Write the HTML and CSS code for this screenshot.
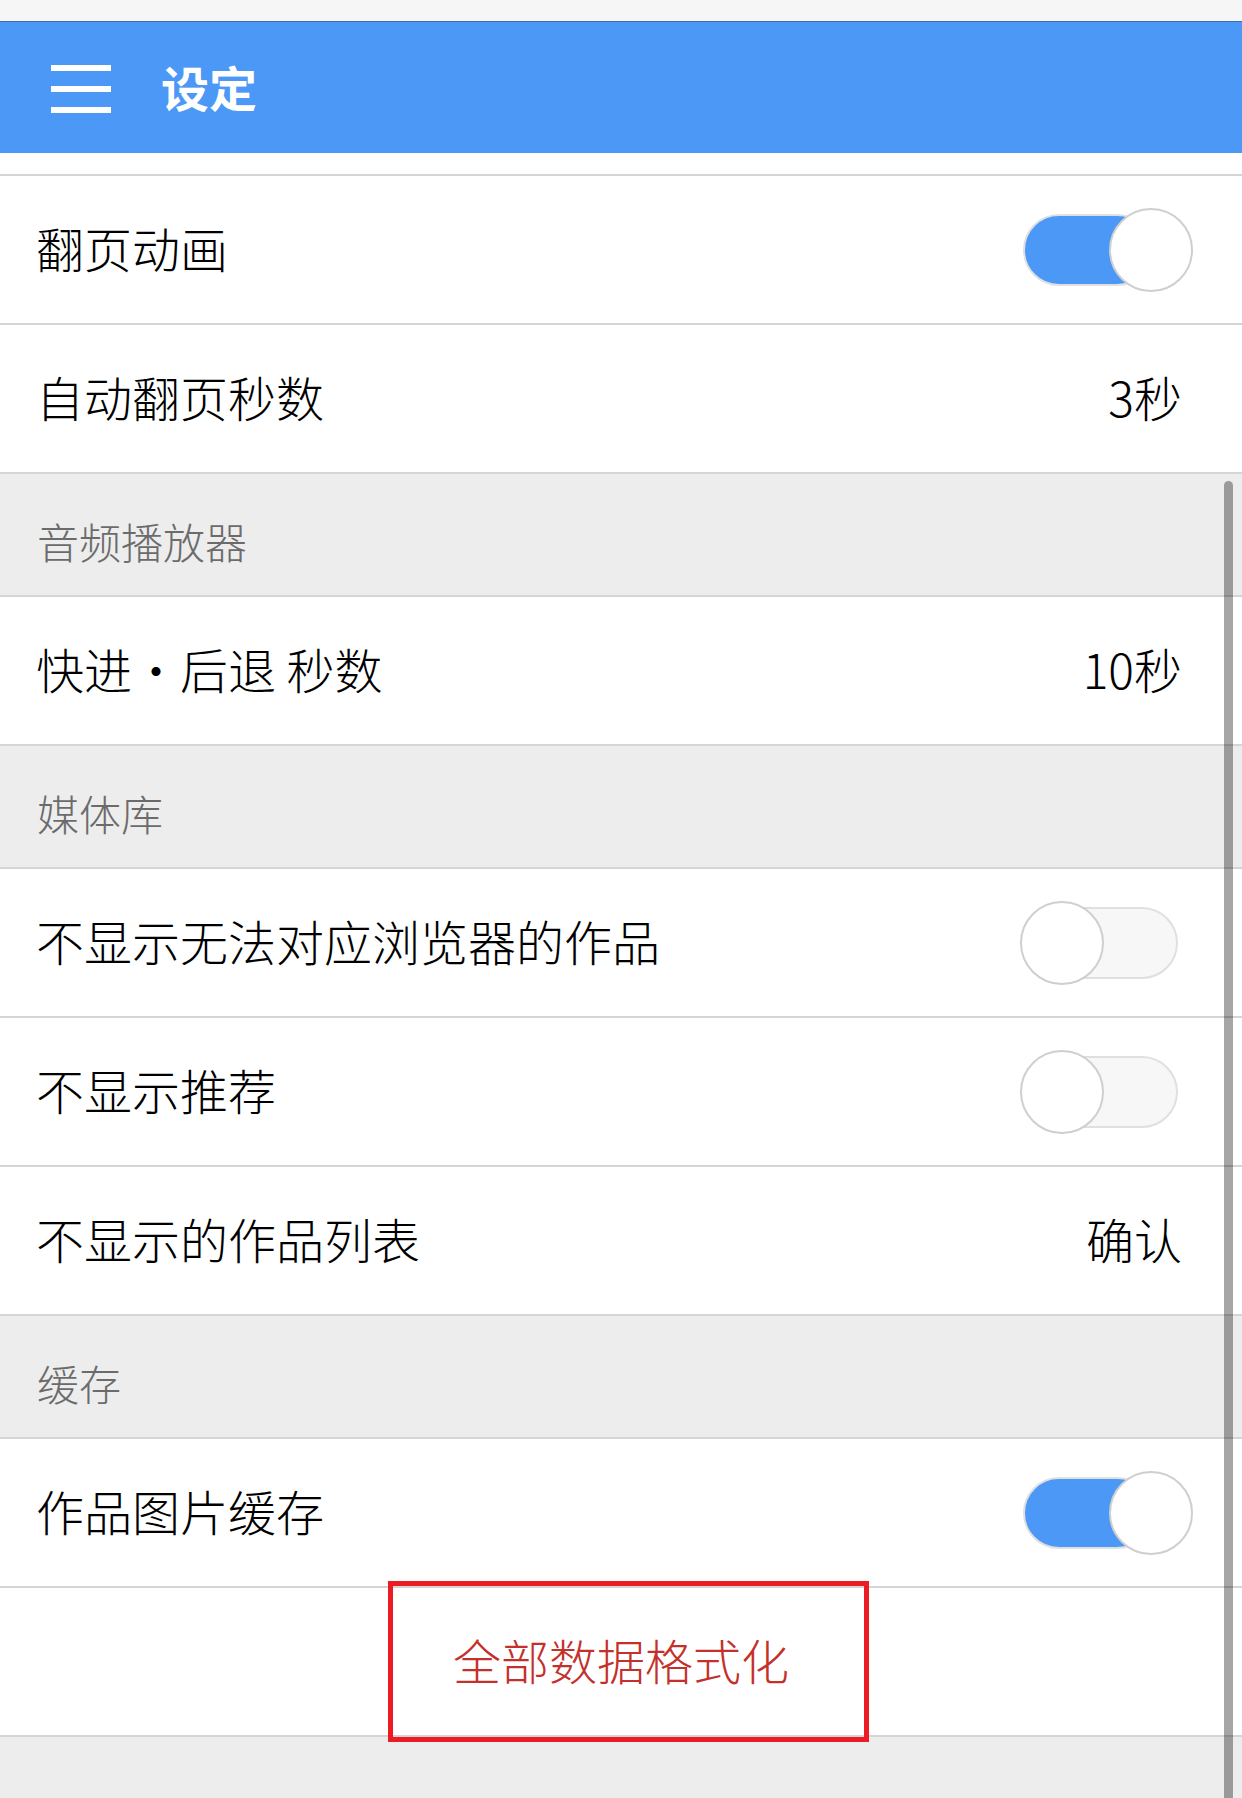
FILE: index.html
```html
<!DOCTYPE html>
<html lang="zh-CN">
<head>
    <meta charset="UTF-8">
    <meta name="viewport" content="width=device-width, initial-scale=1.0">
    <title>设定</title>
    <link rel="stylesheet" href="styles.css">
</head>
<body>

    <div class="status-bar"></div>

    <!-- 顶部导航 -->
    <header class="top-bar">
        <div class="menu-icon">
            <span></span>
            <span></span>
            <span></span>
        </div>
        <h1>设定</h1>
    </header>

    <div class="list">
        <div class="row row-cut"></div>

        <div class="row">
            <span class="label">翻页动画</span>
            <div class="switch on"><div class="track"></div><div class="knob"></div></div>
        </div>
        <div class="row">
            <span class="label">自动翻页秒数</span>
            <span class="value">3秒</span>
        </div>

        <div class="section">音频播放器</div>
        <div class="row">
            <span class="label">快进・后退 秒数</span>
            <span class="value">10秒</span>
        </div>

        <div class="section">媒体库</div>
        <div class="row">
            <span class="label">不显示无法对应浏览器的作品</span>
            <div class="switch"><div class="track"></div><div class="knob"></div></div>
        </div>
        <div class="row">
            <span class="label">不显示推荐</span>
            <div class="switch"><div class="track"></div><div class="knob"></div></div>
        </div>
        <div class="row">
            <span class="label">不显示的作品列表</span>
            <span class="value">确认</span>
        </div>

        <div class="section">缓存</div>
        <div class="row">
            <span class="label">作品图片缓存</span>
            <div class="switch on"><div class="track"></div><div class="knob"></div></div>
        </div>
        <div class="row row-button">
            <span class="danger">全部数据格式化</span>
        </div>
    </div>

    <!-- 标注框 + 滚动条 -->
    <div class="highlight"></div>
    <div class="scrollbar"></div>

</body>
</html>
```

FILE: styles.css
```css
body {
    margin: 0;
    padding: 0;
    background-color: #ededed;
    font-family: "Noto Sans CJK SC", "Noto Sans", sans-serif;
    color: #000;
    position: relative;
    min-height: 1798px;
}
.status-bar {
    height: 21px;
    background-color: #f6f6f6;
}
.top-bar {
    display: flex;
    align-items: center;
    height: 131px;
    background-color: #4b98f6;
    border-top: 1px solid #3c6fb3;
    padding-left: 51px;
}
.menu-icon {
    display: flex;
    flex-direction: column;
    gap: 15px;
    width: 60px;
    margin-top: 2px;
}
.menu-icon span {
    display: block;
    height: 6px;
    background-color: #fff;
}
.top-bar h1 {
    margin: 0 0 4px 50px;
    font-size: 48px;
    font-weight: 700;
    color: #fff;
    line-height: 1;
}
.list {
    background-color: #fff;
}
.row {
    display: flex;
    align-items: center;
    justify-content: space-between;
    height: 147px;
    padding: 0 60px 0 36px;
    background-color: #fff;
    border-bottom: 2px solid #d5d5d5;
}
.row-cut {
    height: 21px;
}
.label,
.value {
    font-size: 48px;
    font-weight: 300;
    line-height: 1;
    margin-bottom: 5px;
}
.section {
    display: flex;
    align-items: center;
    height: 123px;
    padding: 12px 0 0 37px;
    box-sizing: border-box;
    background-color: #ededed;
    border-bottom: 2px solid #d5d5d5;
    font-size: 42px;
    font-weight: 300;
    color: #6b6b6b;
}
.switch {
    position: relative;
    width: 173px;
    height: 84px;
    margin-right: -11px;
}
.switch .track {
    position: absolute;
    left: 3px;
    top: 6px;
    width: 155px;
    height: 72px;
    box-sizing: border-box;
    border: 2px solid #e0e0e0;
    border-radius: 36px;
    background-color: #f7f7f7;
}
.switch.on .track {
    background-color: #4b98f6;
    width: 130px;
}
.switch .knob {
    position: absolute;
    left: 0;
    top: 0;
    width: 84px;
    height: 84px;
    box-sizing: border-box;
    border: 2px solid #cfcfcf;
    border-radius: 50%;
    background-color: #fff;
}
.switch.on .knob {
    left: 89px;
}
.row-button {
    justify-content: center;
    padding: 0;
}
.danger {
    font-size: 48px;
    font-weight: 300;
    line-height: 1;
    margin-bottom: 5px;
    color: #c4302b;
}
.highlight {
    position: absolute;
    left: 388px;
    top: 1581px;
    width: 481px;
    height: 161px;
    box-sizing: border-box;
    border: 5px solid #ed1c24;
}
.scrollbar {
    position: absolute;
    left: 1224px;
    top: 481px;
    width: 9px;
    height: 1317px;
    border-radius: 4.5px 4.5px 0 0;
    background-color: rgba(0, 0, 0, 0.35);
}
```
